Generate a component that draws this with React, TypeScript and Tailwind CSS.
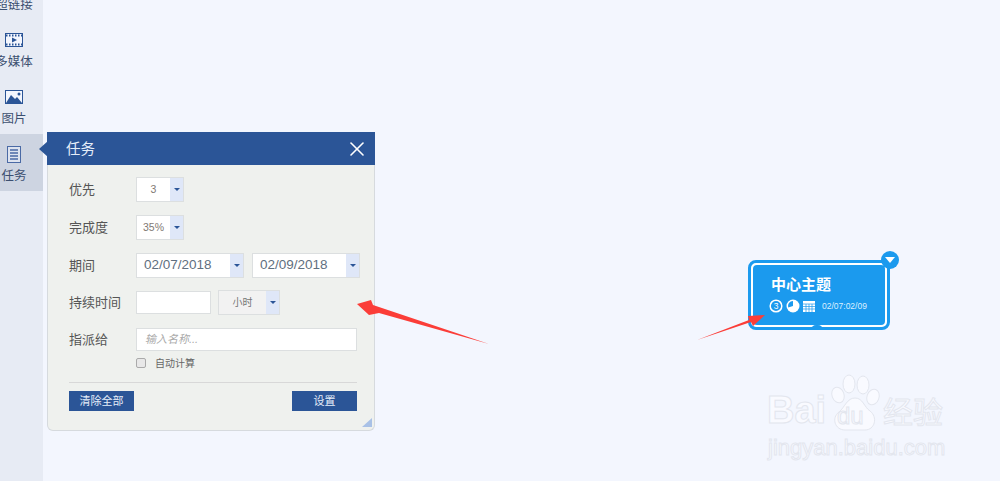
import { X } from "lucide-react";

const font = "font-['Liberation_Sans','Noto_Sans_CJK_SC',sans-serif]";

function SideItem({ label, active, icon }: { label: string; active?: boolean; icon: React.ReactNode }) {
  return (
    <div className={`h-[57px] w-[43px] flex flex-col shrink-0 ${active ? "bg-[#cdd4e1]" : ""}`}>
      <div className="w-[28px] flex flex-col items-center">
        <div className="h-[20px] mt-[10px] flex items-center justify-center">{icon}</div>
        <div className="text-[12.5px] leading-[18px] mt-[3px] whitespace-nowrap text-[#3c4f70]">{label}</div>
      </div>
    </div>
  );
}

function Caret() {
  return (
    <div className="w-[13px] self-stretch bg-[#dfe7f8] flex items-center justify-center">
      <div className="w-0 h-0 border-x-[3px] border-x-transparent border-t-[3px] border-t-[#2b5597]" />
    </div>
  );
}

function Select({ value, className }: { value: string; className: string }) {
  return (
    <div className={`h-[25px] shrink-0 flex border border-[#dcdfe0] bg-white ${className}`}>
      <div className="flex-1 flex items-center justify-center text-[10.5px] text-[#7f7a74]">{value}</div>
      <Caret />
    </div>
  );
}

function DateSelect({ value, className }: { value: string; className?: string }) {
  return (
    <div className={`w-[108px] h-[25px] shrink-0 flex border border-[#dcdfe0] bg-white ${className ?? ""}`}>
      <div className="flex-1 flex items-center pl-[7px] text-[13.5px] text-[#5f6f80]">{value}</div>
      <Caret />
    </div>
  );
}

function Row({ label, children, className }: { label: string; children: React.ReactNode; className?: string }) {
  return (
    <div className={`flex items-center h-[25px] ${className ?? ""}`}>
      <div className="w-[67px] shrink-0 text-[13px] text-[#555]">{label}</div>
      {children}
    </div>
  );
}

function TaskPanel() {
  return (
    <div className="absolute left-[47px] top-[132px] w-[328px] h-[299px] bg-[#eff1ee] border border-[#d6dade] border-t-0 rounded-b-[6px]">
      <div className="absolute -left-[9px] top-[9px] w-0 h-0 border-y-[8px] border-y-transparent border-r-[9px] border-r-[#2b5597]" />
      <div className="h-[33px] -mx-px bg-[#2b5597] flex items-center justify-between pl-[19px] pr-[6px]">
        <span className="text-[14.5px] pt-[2px] text-[#e6eef9]">任务</span>
        <X className="w-[24px] h-[24px] text-white" strokeWidth={1.6} />
      </div>
      <div className="pl-[21px] pr-[14px] pt-[12px]">
        <Row label="优先">
          <Select value="3" className="w-[48px]" />
        </Row>
        <Row label="完成度" className="mt-[13px]">
          <Select value="35%" className="w-[48px]" />
        </Row>
        <Row label="期间" className="mt-[13px]">
          <DateSelect value="02/07/2018" />
          <DateSelect value="02/09/2018" className="ml-[8px]" />
        </Row>
        <Row label="持续时间" className="mt-[12px]">
          <div className="w-[75px] h-[23px] shrink-0 border border-[#dcdfe0] bg-white" />
          <div className="w-[62px] h-[25px] shrink-0 ml-[7px] flex border border-[#dcdfe0] bg-[#f2f2f2]">
            <div className="flex-1 flex items-center justify-center text-[10px] text-[#777]">小时</div>
            <Caret />
          </div>
        </Row>
        <Row label="指派给" className="mt-[12px]">
          <div className="w-[221px] h-[23px] shrink-0 border border-[#dcdfe0] bg-white pl-[8px] flex items-center text-[11px] italic text-[#aaa]">
            输入名称...
          </div>
        </Row>
        <div className="flex items-center pl-[67px] mt-[5px] h-[12px]">
          <div className="w-[10px] h-[10px] rounded-[2px] border border-[#aaa] bg-[#e8e8e8]" />
          <span className="ml-[9px] text-[10px] text-[#666]">自动计算</span>
        </div>
        <div className="h-px bg-[#d8d8d8] mt-[13px] w-[288px]" />
        <div className="flex justify-between w-[288px] mt-[8px]">
          <div className="w-[65px] h-[20px] bg-[#2b5597] flex items-center justify-center text-[11px] text-[#e6eef9]">清除全部</div>
          <div className="w-[65px] h-[20px] bg-[#2b5597] flex items-center justify-center text-[11px] text-[#e6eef9]">设置</div>
        </div>
      </div>
      <svg className="absolute right-[2px] bottom-[3px]" width="10" height="9" viewBox="0 0 10 9">
        <path d="M10 0V9H0Z" fill="#a9c1e6" />
      </svg>
    </div>
  );
}

function TopicNode() {
  return (
    <div className="absolute left-[748px] top-[260px] w-[142px] h-[70px] rounded-[8px] border-[3px] border-[#1b9aee] bg-white p-[2px]">
      <div className="w-full h-full rounded-[4px] bg-[#1b9aee] pl-[18px] pt-[11px] text-white">
        <div className="text-[15px] leading-[18px] font-bold">中心主题</div>
        <div className="flex items-center mt-[5px] h-[14px] -ml-[2px]">
          <svg width="14" height="14" viewBox="0 0 14 14">
            <circle cx="7" cy="7" r="5.8" fill="none" stroke="white" strokeWidth="1.5" />
            <text x="7" y="10" fontSize="8.5" fill="white" textAnchor="middle">3</text>
          </svg>
          <svg className="ml-[3px]" width="14" height="14" viewBox="0 0 14 14">
            <circle cx="7" cy="7" r="6.5" fill="white" />
            <path d="M7 2A5 5 0 0 0 2.2 8.5L7 7Z" fill="#1b9aee" />
          </svg>
          <svg className="ml-[3px]" width="12" height="11" viewBox="0 0 12 11">
            <path d="M0 0H12V11H0Z" fill="white" />
            <path d="M0 3H12M0 5.5H12M0 8H12M3 3V11M6 3V11M9 3V11" stroke="#1b9aee" strokeWidth="0.7" />
          </svg>
          <span className="ml-[7px] text-[8.5px] text-[#dcefff]">02/07:02/09</span>
        </div>
      </div>
      <div className="absolute left-[60px] -bottom-[3px] w-[12px] h-[5px] rounded-t-[6px] bg-[#1b9aee]" />
      <div className="absolute -right-[12px] -top-[12px] w-[18px] h-[18px] rounded-full bg-[#1b9aee] flex items-center justify-center">
        <div className="w-0 h-0 border-x-[5px] border-x-transparent border-t-[6px] border-t-white" />
      </div>
    </div>
  );
}

function Watermark() {
  const stroke = "[-webkit-text-stroke:1px_#e3e6ee]";
  return (
    <div className="absolute left-[766px] top-[372px] w-[190px] h-[90px] text-[#f9faff]">
      <div className={`absolute left-[1px] top-[16px] text-[38px] leading-[44px] font-bold font-['Liberation_Sans'] ${stroke}`}>Bai</div>
      <svg className="absolute left-[62px] top-[2px]" width="54" height="60" viewBox="0 0 54 60" fill="#f9faff" stroke="#e3e6ee">
        <ellipse cx="10" cy="21" rx="6" ry="8" transform="rotate(-20 10 21)" />
        <ellipse cx="21" cy="10" rx="6" ry="9" />
        <ellipse cx="35" cy="11" rx="6" ry="9" />
        <ellipse cx="45" cy="23" rx="6" ry="8" transform="rotate(20 45 23)" />
        <path d="M27 24C35 24 36 33 42 37C50 43 47 56 37 56H17C7 56 3 44 11 38C17 33 19 24 27 24Z" />
      </svg>
      <div className={`absolute left-[71px] top-[30px] text-[24px] leading-[28px] font-['Liberation_Sans'] ${stroke}`}>du</div>
      <div className={`absolute left-[117px] top-[19px] text-[30px] leading-[38px] whitespace-nowrap font-['Noto_Sans_CJK_SC'] ${stroke}`}>经验</div>
      <div className={`absolute left-[2px] top-[64px] text-[22px] leading-[24px] whitespace-nowrap font-['Liberation_Sans'] ${stroke}`}>jingyan.baidu.com</div>
    </div>
  );
}

export default function App() {
  return (
    <div className={`relative w-[1000px] h-[481px] overflow-hidden bg-[#f3f6fe] ${font}`}>
      <div className="w-[43px] h-full bg-[#e7ebf4] overflow-hidden">
        <div className="-mt-[37px] flex flex-col">
          <SideItem label="超链接" icon={<div className="w-[16px] h-[14px]" />} />
          <SideItem
            label="多媒体"
            icon={
              <svg width="18" height="14" viewBox="0 0 18 14">
                <rect x="0.5" y="0.5" width="17" height="13" fill="#f3f6fe" stroke="#2b5597" />
                <path d="M1 2.5H17M1 11.5H17" stroke="#2b5597" strokeDasharray="1.5 1.5" strokeWidth="2" />
                <path d="M7 4.5L12 7L7 9.5Z" fill="#2b5597" />
              </svg>
            }
          />
          <SideItem
            label="图片"
            icon={
              <svg width="18" height="14" viewBox="0 0 18 14">
                <rect x="0.5" y="0.5" width="17" height="13" fill="#f3f6fe" stroke="#2b5597" />
                <path d="M1 13L6 5L10 9L12 7L17 13Z" fill="#2b5597" />
                <circle cx="14" cy="4" r="1.5" fill="#2b5597" />
              </svg>
            }
          />
          <SideItem
            active
            label="任务"
            icon={
              <svg width="14" height="17" viewBox="0 0 14 17">
                <rect x="0.5" y="0.5" width="13" height="16" fill="#dde3ef" stroke="#4a6aa5" />
                <path d="M3 4H11M3 7H11M3 10H11M3 13H11" stroke="#4a6aa5" strokeWidth="1.3" />
              </svg>
            }
          />
        </div>
      </div>
      <TaskPanel />
      <TopicNode />
      <Watermark />
      <svg className="absolute left-0 top-0 pointer-events-none" width="1000" height="481" viewBox="0 0 1000 481">
        <path d="M357 304L371 300L373 305L489 344L379 313L369 315Z" fill="#fb3d38" />
        <path d="M765 315L753 326L751 322L697 340L749 320L748 316Z" fill="#fb3d38" />
      </svg>
    </div>
  );
}
